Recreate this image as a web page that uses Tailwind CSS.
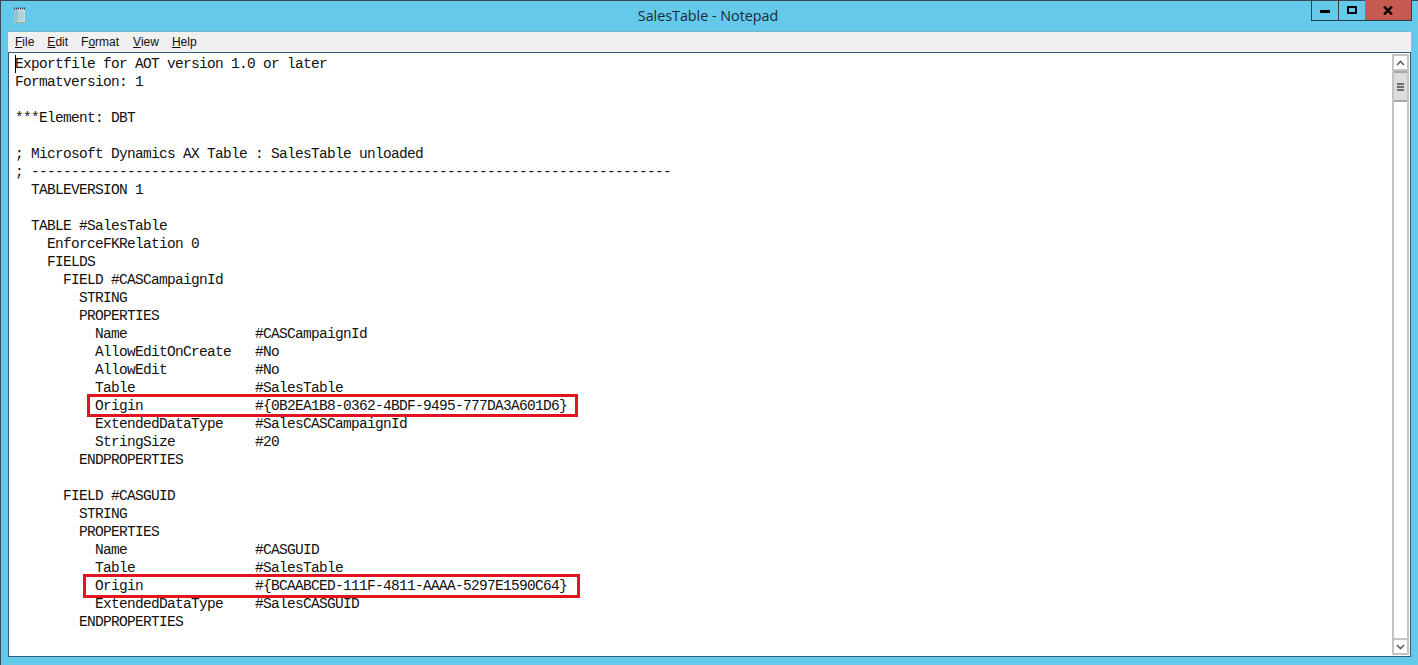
<!DOCTYPE html>
<html lang="en">
<head>
    <meta charset="UTF-8">
    <title>SalesTable - Notepad</title>
    <script src="https://cdn.jsdelivr.net/npm/@tailwindcss/browser@4"></script>
</head>
<body class="overflow-hidden bg-[#65c9ea]">
<div class="w-[1418px] h-[665px] flex flex-col border border-[#3a4a54] border-b-0 border-r-0 bg-[#65c9ea] font-['Open_Sans',sans-serif]">
    <!-- title bar -->
    <div class="h-[30px] flex items-start shrink-0 relative">
        <svg class="ml-[11px] mt-[6px]" width="16" height="18" viewBox="0 0 16 18">
            <path d="M3 3h11v13H3z" fill="#b9a77a"/>
            <path d="M2 2h11v13H2z" fill="#c4e4ea"/>
            <path d="M2 2h4v13H2z" fill="#9cc8d4"/>
            <path d="M3 5h9M3 7h9M3 9h9M3 11h9M3 13h9" stroke="#8ab8c6" stroke-width="0.7"/>
            <path d="M2 1.5h11" stroke="#2f3a40" stroke-width="2" stroke-dasharray="1 1"/>
        </svg>
        <div class="absolute left-0 right-[3px] top-[6px] text-center text-[14.3px] leading-[18px] text-[#1a2a33]">SalesTable - Notepad</div>
        <div class="ml-auto mr-[6px] flex h-[21px] -mt-px border border-t-0 border-[#2c3e4a]">
            <div class="w-[27px] flex items-center justify-center border-r border-[#2c3e4a]">
                <div class="w-[10px] h-[3px] bg-black mt-[3px]"></div>
            </div>
            <div class="w-[26px] flex items-center justify-center">
                <div class="w-[10px] h-[8px] border-2 border-black"></div>
            </div>
            <div class="w-[46px] flex items-center justify-center bg-[#c75a50] text-black">
                <svg width="10" height="9" viewBox="0 0 10 9"><path d="M1 0.5 9 8.5M9 0.5 1 8.5" stroke="#000" stroke-width="2.4"/></svg>
            </div>
        </div>
    </div>

    <!-- client area -->
    <div class="ml-[7px] mr-[7px] flex-1 mb-[8px] flex flex-col border-t border-[#7ab4cc]">
        <div class="h-[20px] bg-[#f0f0f0] flex items-center pl-[7px] gap-[13px] text-[12px] text-[#101010] shrink-0 font-['Liberation_Sans',sans-serif]">
            <span><span class="underline">F</span>ile</span>
            <span><span class="underline">E</span>dit</span>
            <span>F<span class="underline">o</span>rmat</span>
            <span class="ml-px"><span class="underline">V</span>iew</span>
            <span><span class="underline">H</span>elp</span>
        </div>
        <div class="flex-1 relative bg-white flex border border-[#2f5d80] overflow-hidden">
            <div class="w-px h-[18px] bg-black absolute left-[6px] top-[2px]"></div>
            <pre class="flex-1 pl-[6px] pt-[2px] font-['Liberation_Mono',monospace] text-[14.5px] tracking-[-0.7px] leading-[18px] text-[#111111]">Exportfile for AOT version 1.0 or later
Formatversion: 1

***Element: DBT

; Microsoft Dynamics AX Table : SalesTable unloaded
; --------------------------------------------------------------------------------
  TABLEVERSION 1

  TABLE #SalesTable
    EnforceFKRelation 0
    FIELDS
      FIELD #CASCampaignId
        STRING
        PROPERTIES
          Name                #CASCampaignId
          AllowEditOnCreate   #No
          AllowEdit           #No
          Table               #SalesTable
          Origin              #{0B2EA1B8-0362-4BDF-9495-777DA3A601D6}
          ExtendedDataType    #SalesCASCampaignId
          StringSize          #20
        ENDPROPERTIES

      FIELD #CASGUID
        STRING
        PROPERTIES
          Name                #CASGUID
          Table               #SalesTable
          Origin              #{BCAABCED-111F-4811-AAAA-5297E1590C64}
          ExtendedDataType    #SalesCASGUID
        ENDPROPERTIES</pre>
            <!-- red highlight boxes over the text -->
            <div class="absolute left-[78px] top-[341px] w-[491px] h-[23px] border-[3px] border-[#e3141f]"></div>
            <div class="absolute left-[74px] top-[521px] w-[497px] h-[24px] border-[3px] border-[#e3141f]"></div>
            <!-- scrollbar -->
            <div class="w-[17px] my-px mr-px flex flex-col border-x-2 border-[#c4c4c4] bg-white shrink-0">
                <div class="h-[17px] border-y-2 border-[#c4c4c4] flex items-center justify-center shrink-0">
                    <svg width="9" height="6" viewBox="0 0 9 6"><path d="M1 5 4.5 1.5 8 5" fill="none" stroke="#606060" stroke-width="1.6"/></svg>
                </div>
                <div class="h-[31px] bg-[#dcdcdc] border-y-2 border-[#a8a8a8] flex flex-col items-center justify-center gap-[1px] shrink-0">
                    <div class="w-[7px] h-[2px] bg-[#6e6e6e]"></div>
                    <div class="w-[7px] h-[2px] bg-[#6e6e6e]"></div>
                    <div class="w-[7px] h-[2px] bg-[#6e6e6e]"></div>
                </div>
                <div class="flex-1"></div>
                <div class="h-[17px] border-y-2 border-[#c4c4c4] flex items-center justify-center shrink-0">
                    <svg width="9" height="6" viewBox="0 0 9 6"><path d="M1 1 4.5 4.5 8 1" fill="none" stroke="#606060" stroke-width="1.6"/></svg>
                </div>
            </div>
        </div>
    </div>
</div>
</body>
</html>
